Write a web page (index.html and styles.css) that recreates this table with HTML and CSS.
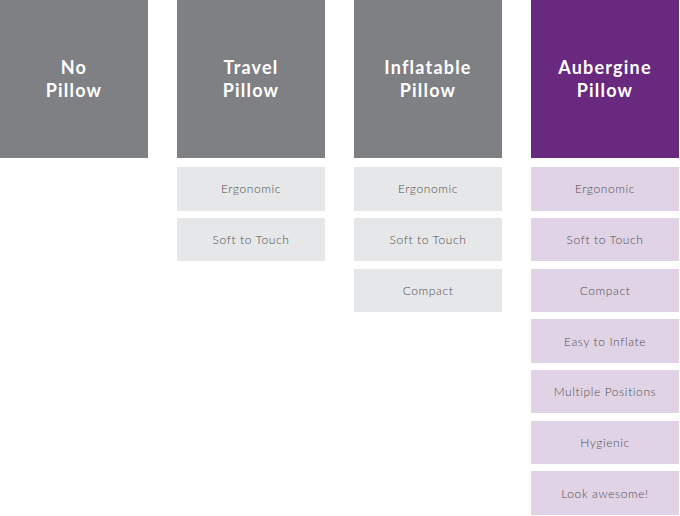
FILE: index.html
```html
<!DOCTYPE html>
<html>
<head>
<meta charset="utf-8">
<link rel="stylesheet" href="styles.css">
</head>
<body>
<div class="compare">
  <div class="col">
    <div class="head">No<br>Pillow</div>
  </div>
  <div class="col">
    <div class="head">Travel<br>Pillow</div>
    <ul class="feats">
      <li>Ergonomic</li>
      <li>Soft to Touch</li>
    </ul>
  </div>
  <div class="col">
    <div class="head">Inflatable<br>Pillow</div>
    <ul class="feats">
      <li>Ergonomic</li>
      <li>Soft to Touch</li>
      <li>Compact</li>
    </ul>
  </div>
  <div class="col col-best">
    <div class="head">Aubergine<br>Pillow</div>
    <ul class="feats">
      <li>Ergonomic</li>
      <li>Soft to Touch</li>
      <li>Compact</li>
      <li>Easy to Inflate</li>
      <li>Multiple Positions</li>
      <li>Hygienic</li>
      <li>Look awesome!</li>
    </ul>
  </div>
</div>
</body>
</html>
```
FILE: styles.css
```css
html, body {
  margin: 0;
  padding: 0;
  background: #ffffff;
}
.compare {
  display: flex;
  align-items: flex-start;
  gap: 29px;
  width: 680px;
}
.col {
  width: 148px;
  display: flex;
  flex-direction: column;
}
.head {
  height: 158px;
  background: #7f8084;
  color: #ffffff;
  font-family: Lato, "Open Sans", sans-serif;
  font-weight: 700;
  font-size: 18px;
  line-height: 23px;
  letter-spacing: 1.2px;
  text-align: center;
  display: flex;
  align-items: center;
  justify-content: center;
  box-sizing: border-box;
  padding-bottom: 1px;
}
.col-best .head {
  background: #68297e;
}
.feats {
  list-style: none;
  margin: 9.3px 0 0 0;
  padding: 0;
  display: flex;
  flex-direction: column;
  gap: 7.3px;
}
.feats li {
  height: 43.4px;
  background: #e6e7e8;
  color: #4f5052;
  font-family: Lato, "Open Sans", sans-serif;
  font-weight: 300;
  font-size: 12px;
  letter-spacing: 0.6px;
  display: flex;
  align-items: center;
  justify-content: center;
}
.col-best .feats li {
  background: #e0d3e6;
}
```
